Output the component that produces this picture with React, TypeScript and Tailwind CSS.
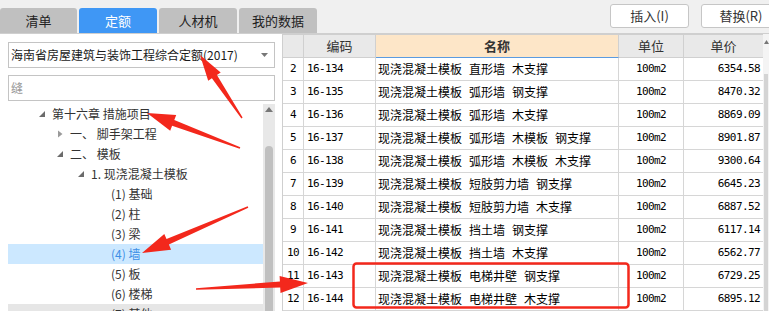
import React from 'react'

const rows: [number, string, string, string][] = [
  [2, '16-134', '现浇混凝土模板 直形墙 木支撑', '6354.58'],
  [3, '16-135', '现浇混凝土模板 弧形墙 钢支撑', '8470.32'],
  [4, '16-136', '现浇混凝土模板 弧形墙 木支撑', '8869.09'],
  [5, '16-137', '现浇混凝土模板 弧形墙 木模板 钢支撑', '8901.87'],
  [6, '16-138', '现浇混凝土模板 弧形墙 木模板 木支撑', '9300.64'],
  [7, '16-139', '现浇混凝土模板 短肢剪力墙 钢支撑', '6645.23'],
  [8, '16-140', '现浇混凝土模板 短肢剪力墙 木支撑', '6887.52'],
  [9, '16-141', '现浇混凝土模板 挡土墙 钢支撑', '6117.14'],
  [10, '16-142', '现浇混凝土模板 挡土墙 木支撑', '6562.77'],
  [11, '16-143', '现浇混凝土模板 电梯井壁 钢支撑', '6729.25'],
  [12, '16-144', '现浇混凝土模板 电梯井壁 木支撑', '6895.12'],
]

type Node = { indent: number; label: string; icon?: 'open' | 'closed'; selected?: boolean; hover?: boolean }

const tree: Node[] = [
  { indent: 38, label: '第十六章 措施项目', icon: 'open' },
  { indent: 56, label: '一、 脚手架工程', icon: 'closed' },
  { indent: 56, label: '二、 模板', icon: 'open' },
  { indent: 77, label: '1. 现浇混凝土模板', icon: 'open' },
  { indent: 111, label: '(1) 基础' },
  { indent: 111, label: '(2) 柱' },
  { indent: 111, label: '(3) 梁' },
  { indent: 111, label: '(4) 墙', selected: true },
  { indent: 111, label: '(5) 板' },
  { indent: 111, label: '(6) 楼梯' },
  { indent: 111, label: '(7) 其他', hover: true },
]

const mono = { fontFamily: '"DejaVu Sans Mono", "Liberation Mono", monospace' }

function arrowPts(tx: number, ty: number, hx: number, hy: number, headLen: number, headW: number, neckW: number, tailW: number) {
  const dx = hx - tx
  const dy = hy - ty
  const len = Math.hypot(dx, dy)
  const ux = dx / len
  const uy = dy / len
  const nx = -uy
  const ny = ux
  const cx = hx - ux * headLen
  const cy = hy - uy * headLen
  const p = [
    [tx + (nx * tailW) / 2, ty + (ny * tailW) / 2],
    [cx + (nx * neckW) / 2, cy + (ny * neckW) / 2],
    [cx + (nx * headW) / 2, cy + (ny * headW) / 2],
    [hx, hy],
    [cx - (nx * headW) / 2, cy - (ny * headW) / 2],
    [cx - (nx * neckW) / 2, cy - (ny * neckW) / 2],
    [tx - (nx * tailW) / 2, ty - (ny * tailW) / 2],
  ]
  return p.map((q) => q.map((v) => v.toFixed(1)).join(',')).join(' ')
}

function Toggle({ kind }: { kind: 'open' | 'closed' }) {
  if (kind === 'open') {
    return (
      <svg width="8" height="8" viewBox="0 0 8 8" className="shrink-0">
        <polygon points="7,1 7,7 1,7" fill="#6b6b6b" />
      </svg>
    )
  }
  return (
    <svg width="8" height="8" viewBox="0 0 8 8" className="shrink-0">
      <polygon points="2,0.5 6.5,4 2,7.5" fill="#9a9a9a" />
    </svg>
  )
}

export default function App() {
  return (
    <div
      className="relative w-[769px] h-[311px] overflow-hidden bg-white text-[12px]"
      style={{ fontFamily: '"Noto Sans CJK SC", "Noto Sans", sans-serif' }}
    >
      {/* top bar */}
      <div className="flex h-[34px] items-end justify-between bg-[#f0f0f0] border-b border-[#cfcfcf]">
        <div className="flex gap-[2px] h-[25px]">
          <div className="w-[77px] flex items-center justify-center rounded-t-[3px] bg-[#c0c0c0] text-[13px] text-[#222]">清单</div>
          <div className="w-[78px] flex items-center justify-center rounded-t-[3px] bg-[#3f97f5] text-[13px] text-white">定额</div>
          <div className="w-[78px] flex items-center justify-center rounded-t-[3px] bg-[#c0c0c0] text-[13px] text-[#222]">人材机</div>
          <div className="w-[78px] flex items-center justify-center rounded-t-[3px] bg-[#c0c0c0] text-[13px] text-[#222]">我的数据</div>
        </div>
        <div className="flex gap-[12px] self-start mt-[4px] -mr-[12px]">
          <div className="w-[79px] h-[24px] flex items-center justify-center rounded-[3px] border border-[#c6c6c6] bg-white text-[13px] text-[#333]">插入(I)</div>
          <div className="w-[80px] h-[24px] flex items-center justify-center rounded-[3px] border border-[#c6c6c6] bg-white text-[13px] text-[#333]">替换(R)</div>
        </div>
      </div>

      <div className="flex h-[277px]">
        {/* left panel */}
        <div className="w-[282px] shrink-0 flex flex-col pl-[8px] pr-[7px]">
          <div className="mt-[8px] h-[26px] flex items-center justify-between border border-[#c4c4c4] pl-[2px] pr-[6px]">
            <span className="text-[12px] text-[#1a1a1a]">海南省房屋建筑与装饰工程综合定额(2017)</span>
            <svg width="7" height="4" viewBox="0 0 7 4">
              <polygon points="0,0 7,0 3.5,4" fill="#777" />
            </svg>
          </div>
          <div className="mt-[7px] h-[26px] flex items-center border border-[#c4c4c4] pl-[2px] text-[#9a9a9a]">缝</div>
          <div className="mt-[3px] flex flex-1 min-h-0">
            <div className="flex-1 flex flex-col">
              {tree.map((n, i) => (
                <div
                  key={i}
                  className={
                    'h-[20px] shrink-0 flex items-center ' +
                    (n.selected ? 'bg-[#cce8ff] text-[#3d8fe6]' : n.hover ? 'bg-[#e6e6e6] text-[#333]' : 'text-[#333]')
                  }
                >
                  <div style={{ width: n.indent - 8 }} className="shrink-0" />
                  {n.icon ? (
                    <div className="flex items-center">
                      <Toggle kind={n.icon} />
                      <span className="ml-[6px] whitespace-pre">{n.label}</span>
                    </div>
                  ) : (
                    <span className="whitespace-pre">{n.label}</span>
                  )}
                </div>
              ))}
            </div>
            {/* tree scrollbar */}
            <div className="w-[12px] shrink-0 bg-[#e8e8e8] flex flex-col items-center">
              <svg width="8" height="5" viewBox="0 0 8 5" className="mt-[3px]">
                <polygon points="0,5 8,5 4,0" fill="#777" />
              </svg>
              <div className="mt-[34px] w-[8px] flex-1 rounded-t-[4px] bg-[#c0c0c0]" />
            </div>
          </div>
        </div>

        {/* table */}
        <div className="flex flex-1 min-w-0">
          <div className="w-[481px] shrink-0 border-l border-t border-[#cfcfcf] text-black">
            <div className="grid grid-cols-[21px_72px_243px_65px_80px] h-[23px] text-[13px] text-[#333]">
              <div className="bg-[#e9e9e9] border-r border-b border-[#d0d0d0]" />
              <div className="bg-[#e9e9e9] border-r border-b border-[#d0d0d0] flex items-center justify-center">编码</div>
              <div className="bg-[#fde6c8] border-r border-b border-b-[#5b9be0] border-r-[#d0d0d0] flex items-center justify-center font-bold">名称</div>
              <div className="bg-[#e9e9e9] border-r border-b border-[#d0d0d0] flex items-center justify-center">单位</div>
              <div className="bg-[#e9e9e9] border-r border-b border-[#d0d0d0] flex items-center justify-center">单价</div>
            </div>
            {rows.map(([n, code, name, price]) => (
              <div key={n} className="grid grid-cols-[21px_72px_243px_65px_80px] h-[23px]">
                <div className="border-r border-b border-[#d6d6d6] flex items-center justify-center text-[11px] tracking-[-0.6px]" style={mono}>
                  {n}
                </div>
                <div className="border-r border-b border-[#d6d6d6] flex items-center pl-[3px] text-[11px] tracking-[-0.6px]" style={mono}>
                  {code}
                </div>
                <div className="border-r border-b border-[#d6d6d6] flex items-center gap-[7px] pl-[2px] text-[12px]">
                  {name.split(' ').map((w, i) => (
                    <span key={i}>{w}</span>
                  ))}
                </div>
                <div className="border-r border-b border-[#d6d6d6] flex items-center justify-center text-[11px] tracking-[-0.6px]" style={mono}>
                  100m2
                </div>
                <div className="border-r border-b border-[#d6d6d6] flex items-center justify-end pr-[3px] text-[11px] tracking-[-0.6px]" style={mono}>
                  {price}
                </div>
              </div>
            ))}
          </div>
          {/* table scrollbar */}
          <div className="flex-1 flex flex-col items-center bg-[#f4f4f4]">
            <svg width="5" height="4" viewBox="0 0 5 4" className="mt-[6px]">
              <polygon points="0,4 5,4 2.5,0" fill="#777" />
            </svg>
            <div className="mt-[30px] w-[4px] flex-1 bg-[#d4d4d4]" />
          </div>
        </div>
      </div>

      {/* annotations */}
      <svg className="absolute inset-0 pointer-events-none" width="769" height="311" viewBox="0 0 769 311">
        <g fill="#f3281c">
          <polygon points={arrowPts(242, 118, 200, 55, 26, 15, 6, 1.5)} />
          <polygon points={arrowPts(240, 148, 147, 113, 28, 17, 6, 1.5)} />
          <polygon points={arrowPts(248, 207, 142, 253, 28, 17, 6, 1.5)} />
          <polygon points={arrowPts(196, 289, 308, 283, 28, 17, 6, 1.5)} />
        </g>
        <rect x="353.5" y="263.5" width="275" height="44" rx="3" fill="none" stroke="#f3281c" strokeWidth="2.5" />
      </svg>
    </div>
  )
}
